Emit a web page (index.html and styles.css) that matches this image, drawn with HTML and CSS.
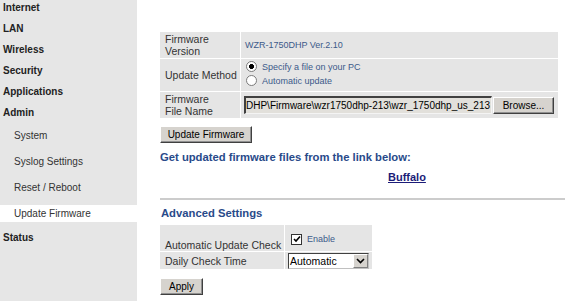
FILE: index.html
```html
<!DOCTYPE html>
<html lang="en">
<head>
<meta charset="utf-8">
<title>Update Firmware</title>
<link rel="stylesheet" href="styles.css">
</head>
<body>
<div class="page">
  <nav class="side">
    <ul class="menu">
      <li class="top">Internet</li>
      <li class="top">LAN</li>
      <li class="top">Wireless</li>
      <li class="top">Security</li>
      <li class="top">Applications</li>
      <li class="top">Admin</li>
      <li class="sub">System</li>
      <li class="sub">Syslog Settings</li>
      <li class="sub">Reset / Reboot</li>
      <li class="sub active">Update Firmware</li>
      <li class="top">Status</li>
    </ul>
  </nav>
  <main class="main">
    <table class="form fw">
      <tr class="r1">
        <td class="lbl">Firmware<br>Version</td>
        <td class="val">WZR-1750DHP Ver.2.10</td>
      </tr>
      <tr class="r2">
        <td class="lbl">Update Method</td>
        <td class="val methods">
          <div class="opts">
            <div class="opt"><span class="radio on"></span>Specify a file on your PC</div>
            <div class="opt"><span class="radio"></span>Automatic update</div>
          </div>
        </td>
      </tr>
      <tr class="r3">
        <td class="lbl">Firmware<br>File Name</td>
        <td class="val file">
          <div class="filerow">
            <div class="filebox">DHP\Firmware\wzr1750dhp-213\wzr_1750dhp_us_213</div>
            <div class="btn browse">Browse...</div>
          </div>
        </td>
      </tr>
    </table>
    <div class="btn update">Update Firmware</div>
    <h2 class="heading">Get updated firmware files from the link below:</h2>
    <div class="linkrow"><a class="link" href="#">Buffalo</a></div>
    <hr class="rule">
    <h2 class="heading adv">Advanced Settings</h2>
    <table class="form advt">
      <tr class="a1">
        <td class="lbl bottom">Automatic Update Check</td>
        <td class="val chk"><div class="chkrow"><span class="checkbox"><svg width="8" height="8" viewBox="0 0 8 8"><path d="M1 4 L3 6 L7 1.5" fill="none" stroke="#000" stroke-width="1.6"/></svg></span>Enable</div></td>
      </tr>
      <tr class="a2">
        <td class="lbl">Daily Check Time</td>
        <td class="val sel">
          <div class="select"><span class="seltext">Automatic</span><span class="arrow"><svg width="9" height="6" viewBox="0 0 9 6"><path d="M1 1 L4.5 4.5 L8 1" fill="none" stroke="#000" stroke-width="1.6"/></svg></span></div>
        </td>
      </tr>
    </table>
    <div class="btn apply">Apply</div>
  </main>
</div>
</body>
</html>
```
FILE: styles.css
```css
html, body {
  margin: 0;
  padding: 0;
  background: #fff;
  font-family: "Liberation Sans", Arial, sans-serif;
}

.page {
  display: flex;
  height: 301px;
  overflow: hidden;
}

.side {
  width: 137px;
  flex: none;
  background: #e6e6e6;
}

.menu {
  display: flex;
  flex-direction: column;
  list-style: none;
  margin: -3px 0 0;
  padding: 0;
}

.top {
  height: 21px;
  line-height: 21px;
  padding-left: 3px;
  font-size: 10px;
  font-weight: bold;
  color: #222;
}

.sub {
  height: 17px;
  line-height: 17px;
  margin: 4px 0 5px;
  padding-left: 14px;
  font-size: 10px;
  color: #333;
}

.sub.active {
  background: #fff;
}

.main {
  flex: 1;
  padding: 32px 0 0 23px;
  min-width: 0;
}

.form {
  border-collapse: separate;
  border-spacing: 0;
}

.form td {
  background: #e5e5e5;
  border-bottom: 1px solid #fff;
  padding: 0;
}

.form td.lbl {
  border-right: 1px solid #fff;
  padding-left: 5px;
  font-size: 10.5px;
  line-height: 12px;
  color: #333;
}

.fw {
  width: 398px;
}

.fw td.lbl {
  width: 75px;
}

.fw .r1 td { height: 26px; }
.fw .r2 td { height: 32px; }
.fw .r3 td { height: 26px; }

.val {
  padding-left: 4px;
  font-size: 9px;
  color: #3c5a8a;
}

.fw td.val {
  padding-left: 4px;
}

.opts {
  margin-top: -3px;
}

.opt {
  display: flex;
  align-items: center;
  height: 14px;
  padding-left: 1px;
}

.radio {
  display: inline-block;
  width: 11px;
  height: 11px;
  box-sizing: border-box;
  border-radius: 50%;
  border: 1px solid #7b7b7b;
  background: #fff;
  margin-right: 5px;
}

.radio.on {
  background: radial-gradient(circle, #000 0 2.2px, #fff 2.8px);
}

.fw td.file {
  padding-left: 3px;
}

.filerow {
  display: flex;
  align-items: center;
  gap: 1px;
}

.filebox {
  width: 248px;
  height: 18px;
  box-sizing: border-box;
  background: #e2e0db;
  border-top: 2px solid #404040;
  border-left: 2px solid #404040;
  border-right: 1px solid #f4f4f4;
  border-bottom: 1px solid #f4f4f4;
  font-size: 10px;
  line-height: 15px;
  color: #000;
  white-space: nowrap;
  overflow: hidden;
}

.btn {
  box-sizing: border-box;
  background: #d6d3ce;
  border-top: 1px solid #fff;
  border-left: 1px solid #fff;
  border-right: 1px solid #404040;
  border-bottom: 1px solid #404040;
  box-shadow: inset -1px -1px 0 #909090;
  font-size: 10px;
  color: #000;
  text-align: center;
  line-height: 15px;
  height: 17px;
}

.browse {
  width: 61px;
}

.update {
  width: 92px;
  margin-top: 7px;
}

.heading {
  margin: 7px 0 0;
  font-size: 11.25px;
  line-height: 14px;
  font-weight: bold;
  color: #294a8a;
}

.linkrow {
  margin-top: 6px;
  padding-left: 228px;
  font-size: 11px;
  line-height: 14px;
}

.link {
  font-weight: bold;
  color: #1c1c78;
  text-decoration: underline;
}

.rule {
  margin: 14px 0 0;
  border: 0;
  height: 2px;
  background: #cccccc;
}

.heading.adv {
  margin-top: 6px;
  padding-left: 1px;
}

.advt {
  margin-top: 5px;
  width: 212px;
}

.advt td.lbl {
  width: 119px;
}

.advt .a1 td { height: 26px; }
.advt .a2 td { height: 17px; }

.advt td.bottom {
  vertical-align: bottom;
}

.advt td.chk {
  padding-left: 6px;
}

.chkrow {
  display: flex;
  align-items: center;
  margin-top: 2px;
}

.checkbox {
  display: inline-flex;
  align-items: center;
  justify-content: center;
  width: 11px;
  height: 11px;
  box-sizing: border-box;
  border: 1px solid #333;
  background: #fff;
  margin-right: 5px;
}

.advt td.sel {
  padding-left: 3px;
}

.select {
  display: flex;
  width: 81px;
  height: 16px;
  box-sizing: border-box;
  border: 1px solid #404040;
  border-right-color: #c0c0c0;
  border-bottom-color: #c0c0c0;
  background: #fff;
}

.seltext {
  flex: 1;
  font-size: 10.5px;
  line-height: 14px;
  color: #000;
  padding-left: 1px;
}

.arrow {
  width: 15px;
  flex: none;
  display: flex;
  align-items: center;
  justify-content: center;
  background: #d6d3ce;
  box-sizing: border-box;
  border: 1px solid #808080;
  border-top-color: #fff;
  border-left-color: #fff;
}

.apply {
  width: 43px;
  margin-top: 8px;
}
```
